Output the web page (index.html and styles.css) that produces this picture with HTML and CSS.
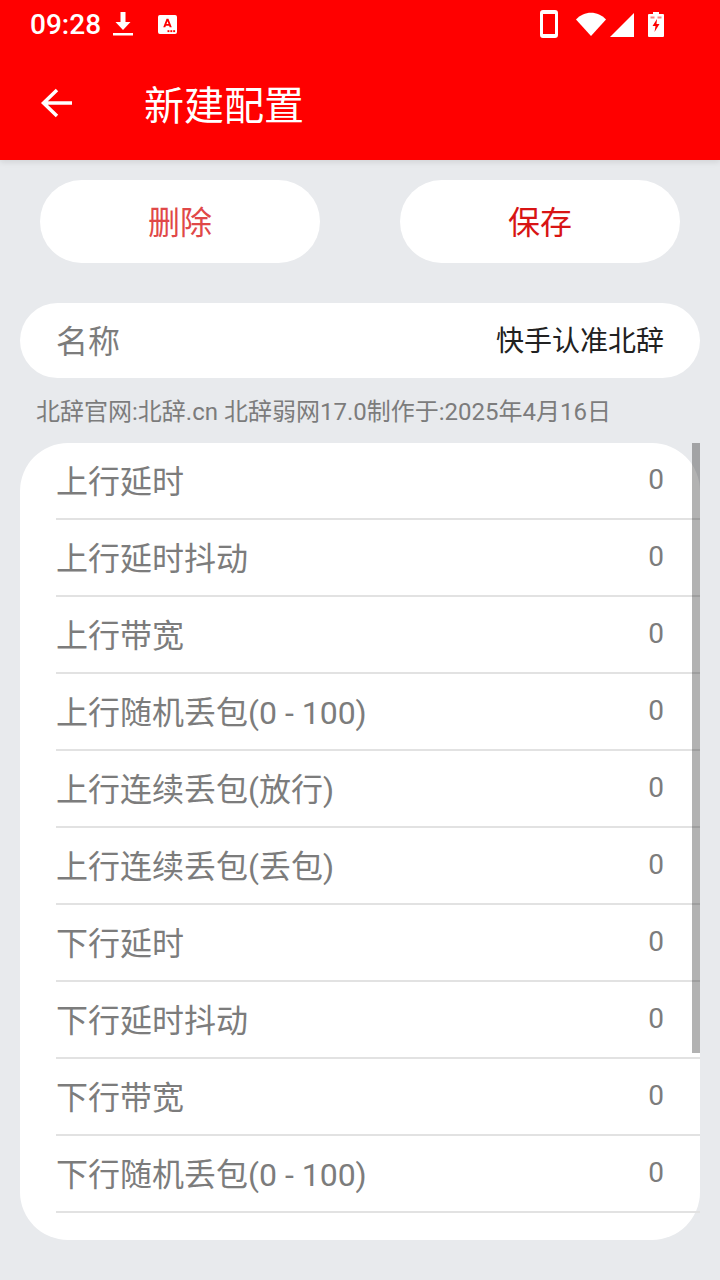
FILE: index.html
```html
<!DOCTYPE html>
<html lang="zh-CN">
<head>
<meta charset="UTF-8">
<meta name="viewport" content="width=device-width, initial-scale=1.0">
<title>新建配置</title>
<link rel="stylesheet" href="styles.css">
</head>
<body>

<div class="header">
    <div class="status_bar">
        <span class="clock">09:28</span>
        <svg class="status_icon" width="22" height="26" viewBox="0 0 22 26"><path d="M8.500 1h5v10h5L11 19 3.500 11h5z" fill="#fff"/><rect x="1" y="22" width="20" height="2.500" fill="#fff"/></svg>
        <svg class="status_icon app_icon" width="19" height="19" viewBox="0 0 20 20"><rect width="20" height="20" rx="2" fill="#fff"/><path d="M5.500 13 9 4h2l3.500 9h-2.200l-.6-1.800H8.300L7.700 13zM8.900 9.500h2.200L10 6.500z" fill="#f00"/><rect x="10" y="16" width="2" height="2" fill="#f00"/><rect x="13" y="16" width="2" height="2" fill="#f00"/><rect x="16" y="16" width="2" height="2" fill="#f00"/></svg>
        <div class="status_right">
            <svg width="18" height="28" viewBox="0 0 18 28"><path fill-rule="evenodd" d="M3 0h12a3 3 0 0 1 3 3v22a3 3 0 0 1-3 3H3a3 3 0 0 1-3-3V3a3 3 0 0 1 3-3zM3 4v20h12V4z" fill="#fff"/></svg>
            <svg class="wifi" width="30" height="24" viewBox="0 0 30 24"><path d="M0 7.500C8-1.500 22-1.500 30 7.500L15 24z" fill="#fff"/></svg>
            <svg class="signal" width="24" height="24" viewBox="0 0 24 24"><path d="M24 0v24H0z" fill="#fff"/></svg>
            <svg class="battery" width="16" height="25" viewBox="0 0 16 25"><path fill-rule="evenodd" d="M5 0h6v2h4a1 1 0 0 1 1 1v21a1 1 0 0 1-1 1H1a1 1 0 0 1-1-1V3a1 1 0 0 1 1-1h4zM9 7 4.500 14H7.500L6.500 20 11.500 12H8.500z" fill="#fff"/><path d="M2.500 4.500h4v2h-4zM9.500 4.500h4v2h-4z" fill="#f00" opacity=".5"/></svg>
        </div>
    </div>
    <div class="toolbar">
        <svg class="back" width="34" height="32" viewBox="0 0 34 32"><path d="M32 16H4M17 3 3.500 16 17 29" fill="none" stroke="#fff" stroke-width="3.500"/></svg>
        <h1 class="title">新建配置</h1>
    </div>
</div>

<div class="actions">
    <button class="button delete_button">删除</button>
    <button class="button save_button">保存</button>
</div>

<div class="name_row">
    <span class="label">名称</span>
    <span class="name_value">快手认准北辞</span>
</div>

<p class="note">北辞官网:北辞.cn 北辞弱网17.0制作于:2025年4月16日</p>

<div class="list">
    <div class="row"><span class="label">上行延时</span><span class="value">0</span></div>
    <div class="row"><span class="label">上行延时抖动</span><span class="value">0</span></div>
    <div class="row"><span class="label">上行带宽</span><span class="value">0</span></div>
    <div class="row"><span class="label">上行随机丢包(0 - 100)</span><span class="value">0</span></div>
    <div class="row"><span class="label">上行连续丢包(放行)</span><span class="value">0</span></div>
    <div class="row"><span class="label">上行连续丢包(丢包)</span><span class="value">0</span></div>
    <div class="row"><span class="label">下行延时</span><span class="value">0</span></div>
    <div class="row"><span class="label">下行延时抖动</span><span class="value">0</span></div>
    <div class="row"><span class="label">下行带宽</span><span class="value">0</span></div>
    <div class="row"><span class="label">下行随机丢包(0 - 100)</span><span class="value">0</span></div>
    <div class="scrollbar"></div>
</div>

</body>
</html>
```

FILE: styles.css
```css
body {
    font-family: Roboto, "Noto Sans CJK SC", sans-serif;
    background-color: #e8eaed;
    margin: 0;
    height: 1280px;
    overflow: hidden;
}

.header {
    background-color: #ff0000;
    height: 160px;
    box-shadow: 0 2px 6px rgba(0, 0, 0, 0.1);
}

.status_bar {
    height: 48px;
    display: flex;
    align-items: center;
    padding-left: 30px;
    padding-right: 56px;
    color: #ffffff;
}

.clock {
    font-size: 28px;
    font-weight: 500;
    width: 82px;
}

.status_icon {
    flex: none;
}

.app_icon {
    margin-left: 24px;
}

.status_right {
    margin-left: auto;
    display: flex;
    align-items: center;
}

.wifi {
    margin-left: 18px;
}

.signal {
    margin-left: 4px;
    margin-top: 1px;
}

.battery {
    margin-left: 14px;
}

.toolbar {
    height: 112px;
    display: flex;
    align-items: center;
    padding-left: 40px;
    padding-bottom: 2px;
    box-sizing: border-box;
}

.back {
    flex: none;
}

.title {
    font-size: 40px;
    font-weight: 400;
    color: #ffffff;
    margin: 0 0 0 70px;
}

.actions {
    display: flex;
    justify-content: space-between;
    padding: 20px 40px 0;
}

.button {
    width: 280px;
    height: 83px;
    border: none;
    border-radius: 42px;
    background-color: #ffffff;
    font-family: inherit;
    font-size: 32px;
    padding: 0 0 4px;
}

.delete_button {
    color: #e04848;
}

.save_button {
    color: #d81414;
}

.name_row {
    margin: 40px 20px 0;
    height: 75px;
    padding: 0 36px 4px;
    box-sizing: border-box;
    border-radius: 38px;
    background-color: #ffffff;
    display: flex;
    align-items: center;
    justify-content: space-between;
}

.label {
    font-size: 32px;
    color: #7c7c7c;
}

.name_value {
    font-size: 28px;
    color: #212121;
}

.note {
    font-size: 24px;
    line-height: 32px;
    color: #7c7c7c;
    margin: 18px 0 15px 36px;
    white-space: nowrap;
}

.list {
    position: relative;
    margin: 0 20px;
    height: 797px;
    padding-left: 36px;
    border-radius: 48px;
    background-color: #ffffff;
}

.row {
    height: 71px;
    border-bottom: 2px solid #e2e2e2;
    display: flex;
    align-items: center;
    justify-content: space-between;
    padding-right: 36px;
    padding-bottom: 4px;
}

.value {
    font-size: 28px;
    color: #7c7c7c;
    margin-top: 2px;
}

.scrollbar {
    position: absolute;
    top: 0;
    right: 0;
    width: 8px;
    height: 610px;
    background-color: rgba(0, 0, 0, 0.3);
}
```
